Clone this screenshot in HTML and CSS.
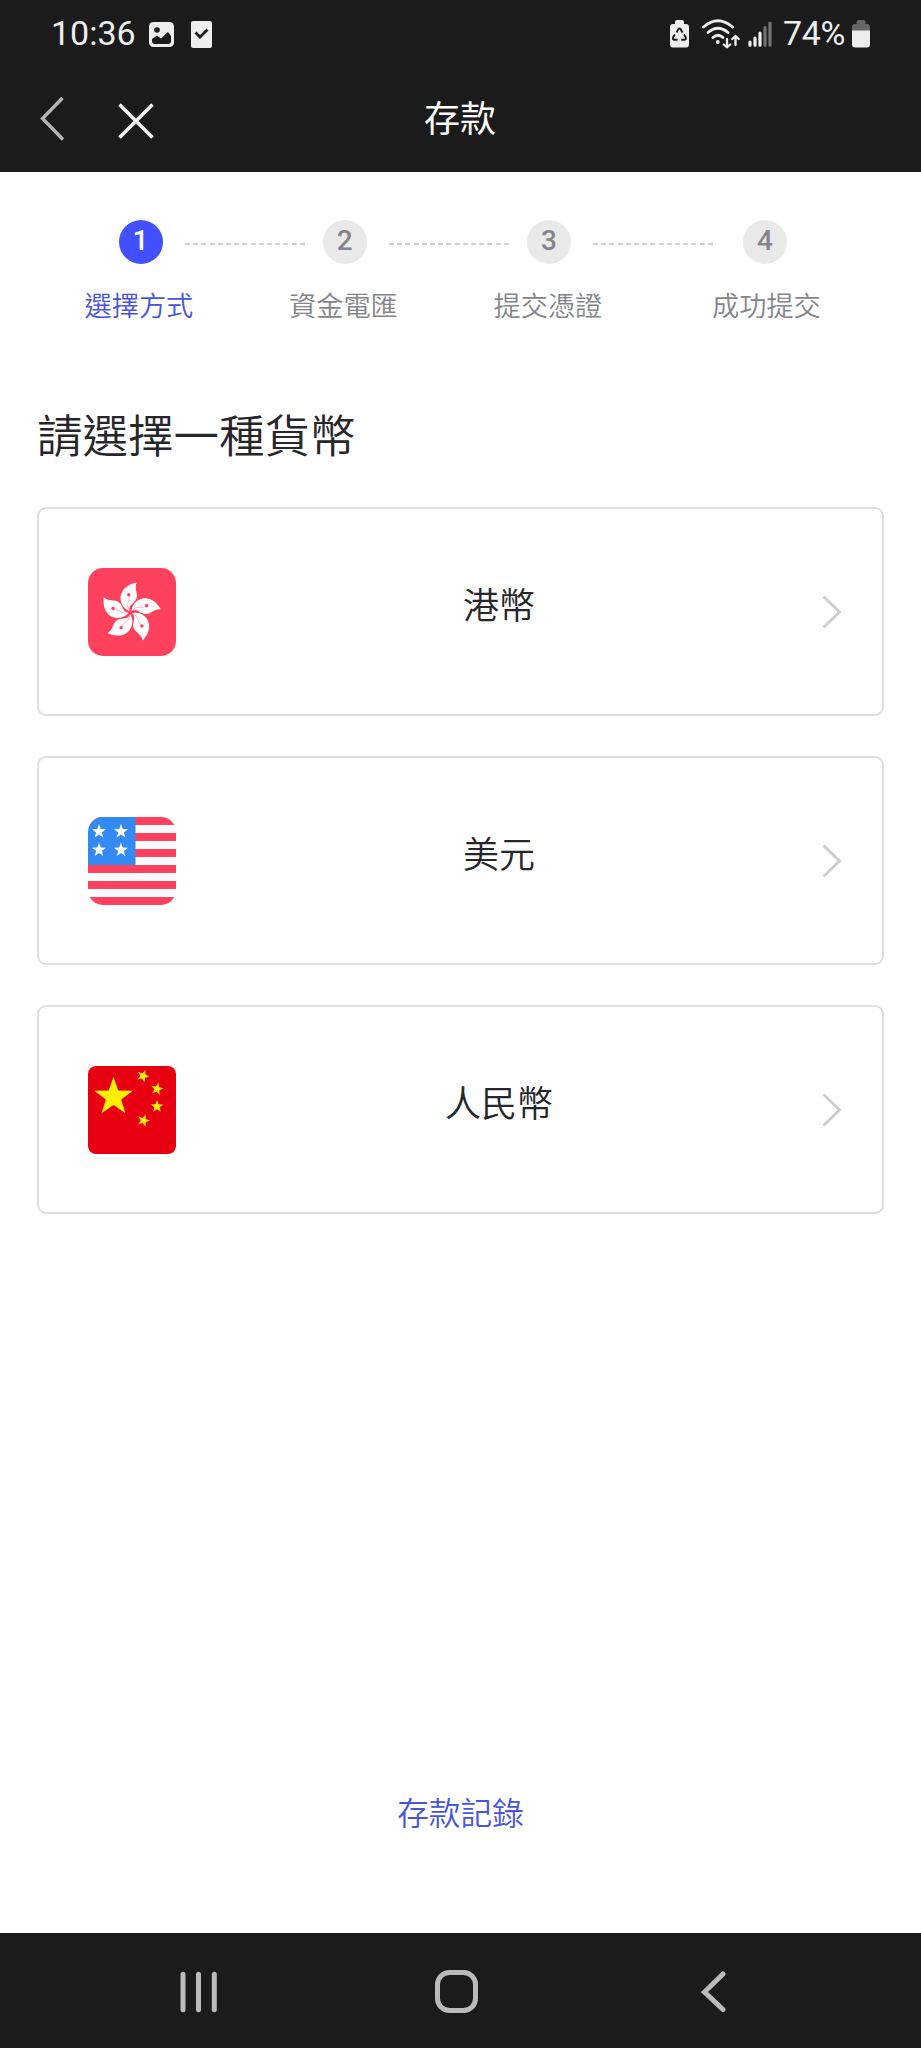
FILE: index.html
```html
<!DOCTYPE html>
<html lang="zh-Hant">
<head>
<meta charset="utf-8">
<title>存款</title>
<link rel="stylesheet" href="styles.css">
</head>
<body>
<div class="screen">
  <header class="top">
    <div class="status">
      <span class="time">10:36</span>
      <svg class="status-picture" width="25" height="25" viewBox="0 0 25 25"><rect width="25" height="25" rx="4.5" fill="#eee"/><circle cx="8" cy="8" r="2.8" fill="#1b1b1b"/><path d="M3 19v-2l5-3.500 4 3 7-6.500 3 4v5q0 3-3 3H6q-3 0-3-3z" fill="#1b1b1b"/></svg>
      <svg class="status-task" width="21" height="27" viewBox="0 0 21 27"><rect width="21" height="27" rx="2" fill="#eee"/><path d="M4.500 11.500l4.500 4.500 7.500-7.500" fill="none" stroke="#1b1b1b" stroke-width="2.800"/></svg>
      <svg class="status-saver" width="19" height="28" viewBox="0 0 19 28"><path d="M5 4V2q0-2 2-2h5q2 0 2 2v2h2q3 0 3 3v17q0 3.500-3 3.500H3q-3 0-3-3.500V7q0-3 3-3z" fill="#eee"/><path d="M6.500 12.500l2-3.500q1-1.300 2 0l2 3.500M14 14.500l1.800 3q.6 2.200-1.500 2.200h-3M7.500 19.700h-3q-2.200 0-1.500-2.200l1.800-3" fill="none" stroke="#1b1b1b" stroke-width="1.900"/></svg>
      <svg class="status-wifi" width="38" height="30" viewBox="0 0 38 30"><g fill="none" stroke="#eee" stroke-width="2.800" stroke-linecap="round"><path d="M1.500 8Q16-4.500 30.500 8M6 13.500Q16 5 26 13.500M11 18.500q5-4.500 10 0"/><path d="M25 20v8M21.800 25.500L25 28.300l3.200-2.800M33.500 26v-8.500M30.300 20l3.200-3 3.200 3" stroke-width="2.300"/></g><circle cx="15.800" cy="23" r="1.900" fill="#eee"/></svg>
      <svg class="status-signal" width="24" height="26" viewBox="0 0 24 26"><g stroke-width="3.200" stroke-linecap="round"><path d="M2 21v3.200M7 17v7.200M12 12v12.200" stroke="#eee"/><path d="M17 6.500v17.700M22 2v22.200" stroke="#717171"/></g></svg>
      <span class="percent">74%</span>
      <svg class="status-battery" width="18" height="28" viewBox="0 0 18 28"><path d="M0 11V7q0-3 3-3h1.500V2q0-2 2-2h5q2 0 2 2v2H15q3 0 3 3v4z" fill="#666"/><path d="M0 10.500h18V24q0 3.500-3 3.500H3q-3 0-3-3.500z" fill="#eee"/></svg>
    </div>
    <nav class="titlebar">
      <svg class="back" width="25" height="48" viewBox="0 0 25 48"><path d="M22.500 2L2.500 22.500l20.500 21" fill="none" stroke="#b5b5b5" stroke-width="3.400"/></svg>
      <svg class="close" width="38" height="38" viewBox="0 0 38 38"><path d="M2.500 2.500l33 33M35.500 2.500l-33 33" stroke="#f2f2f2" stroke-width="3.600"/></svg>
      <h1 class="title">存款</h1>
    </nav>
  </header>

  <main class="content">
    <div class="steps">
      <span class="dot dot-active">1</span><span class="line"></span>
      <span class="dot">2</span><span class="line"></span>
      <span class="dot">3</span><span class="line line-last"></span>
      <span class="dot">4</span>
    </div>
    <div class="labels">
      <span class="label label-active">選擇方式</span>
      <span class="label">資金電匯</span>
      <span class="label">提交憑證</span>
      <span class="label label-last">成功提交</span>
    </div>

    <h2 class="heading">請選擇一種貨幣</h2>

    <div class="cards">
      <a class="card">
        <svg class="flag" viewBox="0 0 88 88">
          <defs><g id="petal"><path d="M41.500 43C30 39 27 19 48.700 14.500C46 20 49.500 24 48.900 28.500C48 36 39.500 36 41.500 43z" fill="#fff"/><path d="M41.500 42C37 37 42 34 41 28" fill="none" stroke="#ff9aab" stroke-width=".7"/><circle cx="40.800" cy="26.800" r="1.700" fill="#ff415d"/></g></defs>
          <rect width="88" height="88" rx="15" fill="#ff415d"/>
          <use href="#petal"/><use href="#petal" transform="rotate(72 42.300 44.500)"/><use href="#petal" transform="rotate(144 42.300 44.500)"/><use href="#petal" transform="rotate(216 42.300 44.500)"/><use href="#petal" transform="rotate(288 42.300 44.500)"/>
        </svg>
        <span class="name">港幣</span>
        <svg class="arrow" width="20" height="34" viewBox="0 0 20 34"><path d="M1.500 1.500L17.500 17l-16 15.500" fill="none" stroke="#ccccce" stroke-width="2.800"/></svg>
      </a>
      <a class="card">
        <svg class="flag" viewBox="0 0 88 88">
          <defs>
            <clipPath id="round"><rect width="88" height="88" rx="15"/></clipPath>
            <path id="star" d="M0-10L2.350-3.240 9.510-3.090 3.800 1.240 5.880 8.090 0 4 -5.880 8.090 -3.800 1.240 -9.510-3.090 -2.350-3.240z"/>
          </defs>
          <g clip-path="url(#round)"><rect width="88" height="88" fill="#fff"/><path d="M0 0h88v8H0zM0 16h88v8H0zM0 32h88v8H0zM0 48h88v8H0zM0 64h88v8H0zM0 80h88v8H0z" fill="#ff415d"/><rect width="47.500" height="48" fill="#338af3"/></g>
          <g fill="#fff"><use href="#star" transform="translate(11 14.500) scale(.74)"/><use href="#star" transform="translate(33 14.500) scale(.74)"/><use href="#star" transform="translate(11 33) scale(.74)"/><use href="#star" transform="translate(33 33) scale(.74)"/></g>
        </svg>
        <span class="name">美元</span>
        <svg class="arrow" width="20" height="34" viewBox="0 0 20 34"><path d="M1.500 1.500L17.500 17l-16 15.500" fill="none" stroke="#ccccce" stroke-width="2.800"/></svg>
      </a>
      <a class="card">
        <svg class="flag" viewBox="0 0 88 88">
          <rect width="88" height="88" rx="8" fill="#e60012"/>
          <g fill="#fff000"><use href="#star" transform="translate(25.500 31) scale(2.020)"/><use href="#star" transform="translate(55 10) rotate(22) scale(.66)"/><use href="#star" transform="translate(69 23) rotate(12) scale(.66)"/><use href="#star" transform="translate(69 40.500) scale(.66)"/><use href="#star" transform="translate(55.500 54.500) rotate(18) scale(.66)"/></g>
        </svg>
        <span class="name">人民幣</span>
        <svg class="arrow" width="20" height="34" viewBox="0 0 20 34"><path d="M1.500 1.500L17.500 17l-16 15.500" fill="none" stroke="#ccccce" stroke-width="2.800"/></svg>
      </a>
    </div>

    <a class="record">存款記錄</a>
  </main>

  <footer class="navbar">
    <svg class="recents" width="38" height="42" viewBox="0 0 38 42"><path d="M3 3.200v35.600M18.500 3.200v35.600M34.300 3.200v35.600" stroke="#bbb" stroke-width="5" stroke-linecap="round"/></svg>
    <svg class="home" width="43" height="43" viewBox="0 0 43 43"><rect x="2.500" y="2.500" width="38" height="38" rx="12" fill="none" stroke="#bbb" stroke-width="5"/></svg>
    <svg class="nav-back" width="25" height="42" viewBox="0 0 25 42"><path d="M22 3L3.500 21 22 38.500" fill="none" stroke="#bbb" stroke-width="5" stroke-linecap="round"/></svg>
  </footer>
</div>
</body>
</html>
```
FILE: styles.css
```css
* { box-sizing: border-box; }
body {
  margin: 0;
  background: #fff;
  font-family: Roboto, "Noto Sans CJK TC", sans-serif;
  color: #26262b;
}
svg { display: block; flex: none; }
.screen { display: flex; flex-direction: column; width: 921px; height: 2048px; }

.top { height: 172px; background: #1b1b1b; color: #eee; }
.status { display: flex; align-items: flex-start; height: 84px; padding: 0 51px; }
.time, .percent { font-size: 34px; line-height: 40px; margin-top: 13px; white-space: nowrap; }
.time { width: 98px; }
.status-picture { margin-top: 22px; }
.status-task { margin: 21px 0 0 17px; }
.status-saver { margin: 20px 0 0 458px; }
.status-wifi { margin: 19px 0 0 13px; }
.status-signal { margin: 21px 0 0 8px; }
.percent { width: 68px; margin-left: 11px; letter-spacing: -.3px; }
.status-battery { margin: 20px 0 0 1px; }
.titlebar { display: flex; align-items: flex-start; padding-left: 40px; }
.back { margin-top: 12px; }
.close { margin: 18px 0 0 52px; }
.title { margin: 9px 0 0 269px; font-size: 36px; line-height: 54px; font-weight: 400; color: #fff; }

.content { display: flex; flex-direction: column; flex: 1; }
.steps { display: flex; align-items: center; margin-top: 47px; padding-left: 118.500px; height: 45px; }
.dot {
  width: 44px; height: 44px; border-radius: 50%;
  background: #e9e9ea; color: #85858d;
  font-size: 28px; line-height: 42px; font-weight: 500; text-align: center;
}
.dot-active { background: #4350ff; color: #fff; }
.line {
  width: 120px; height: 2px; margin: 4px 18.200px 0 22px;
  background: repeating-linear-gradient(90deg, #d0d0d2 0 5px, transparent 5px 8.200px);
}
.line-last { margin-right: 30px; }
.labels { display: flex; padding-left: 84.500px; margin-top: 23px; }
.label { width: 204.500px; font-size: 27.200px; line-height: 40px; color: #85858d; font-weight: 350; white-space: nowrap; }
.label-active { color: #4855d8; }
.label-last { margin-left: 14px; width: auto; }

.heading { margin: 77px 0 0 37px; font-size: 45.500px; line-height: 68px; font-weight: 350; }
.cards { display: flex; flex-direction: column; gap: 40px; margin: 35px 37px 0; }
.card {
  display: flex; align-items: center; height: 209px;
  padding: 0 40px 0 49px; border: 2px solid #dedee0; border-radius: 9px;
}
.flag { width: 88px; height: 88px; }
.name { flex: 1; margin-top: -10px; text-align: center; font-size: 36px; line-height: 54px; font-weight: 350; }
.record { margin: 577px auto 0; font-size: 31.700px; line-height: 48px; font-weight: 350; color: #4855d8; }

.navbar { display: flex; align-items: flex-start; height: 115px; padding: 38px 0 0 180px; background: #1b1b1b; }
.home { margin: -1px 0 0 217px; }
.nav-back { margin-left: 223px; }
```
